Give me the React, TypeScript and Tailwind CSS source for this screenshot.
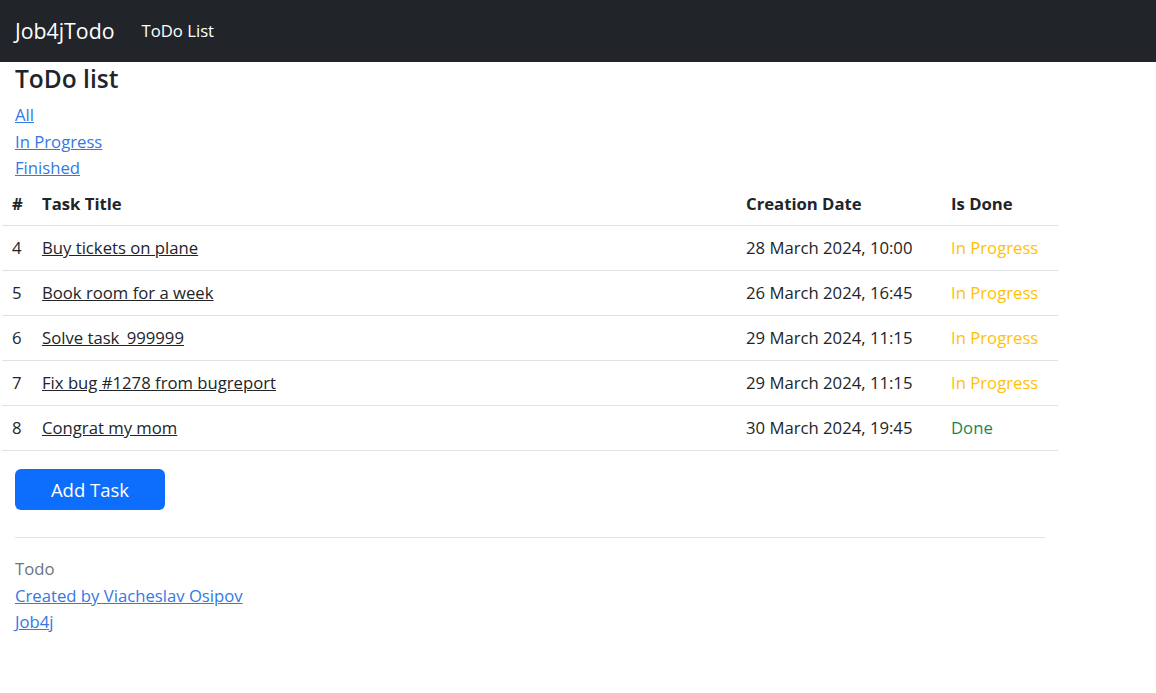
const tasks = [
    { id: 4, title: 'Buy tickets on plane', created: '28 March 2024, 10:00', done: false },
    { id: 5, title: 'Book room for a week', created: '26 March 2024, 16:45', done: false },
    { id: 6, title: 'Solve task_999999', created: '29 March 2024, 11:15', done: false },
    { id: 7, title: 'Fix bug #1278 from bugreport', created: '29 March 2024, 11:15', done: false },
    { id: 8, title: 'Congrat my mom', created: '30 March 2024, 19:45', done: true },
]

export default function App() {
    return (
        <div className="min-h-[693px] bg-white text-[#212529] text-[16.7px] font-['Open_Sans',sans-serif]">
            <nav className="h-[62px] bg-[#212529] flex items-center px-[15px]">
                <a href="#" className="text-white text-[21.3px] mr-[27px]">Job4jTodo</a>
                <a href="#" className="text-white text-[16.7px]">ToDo List</a>
            </nav>

            <div className="pt-[2px]">
                <h4 className="px-[15px] text-[24.5px] font-semibold leading-[30px]">ToDo list</h4>
                <div className="px-[15px] mt-[8px] flex flex-col leading-[26.5px]">
                    <a href="#" className="text-[#3478e5] underline w-fit">All</a>
                    <a href="#" className="text-[#3478e5] underline w-fit">In Progress</a>
                    <a href="#" className="text-[#3478e5] underline w-fit">Finished</a>
                </div>

                <table className="ml-[2px] w-[1056px] border-collapse">
                    <thead>
                        <tr className="h-[44px] border-b border-[#dee2e6] text-left">
                            <th className="w-[30px] pl-[10px] font-bold">#</th>
                            <th className="w-[704px] pl-[10px] font-bold">Task Title</th>
                            <th className="w-[205px] pl-[10px] font-bold">Creation Date</th>
                            <th className="pl-[10px] font-bold">Is Done</th>
                        </tr>
                    </thead>
                    <tbody>
                        {tasks.map(t => (
                            <tr key={t.id} className="h-[45px] border-b border-[#dee2e6]">
                                <td className="pl-[10px]">{t.id}</td>
                                <td className="pl-[10px]">
                                    <a href="#" className="text-[#212529] underline">{t.title}</a>
                                </td>
                                <td className="pl-[10px]">{t.created}</td>
                                <td className={`pl-[10px] ${t.done ? 'text-[#198754]' : 'text-[#ffc107]'}`}>
                                    {t.done ? 'Done' : 'In Progress'}
                                </td>
                            </tr>
                        ))}
                    </tbody>
                </table>

                <div className="px-[15px] mt-[18px]">
                    <button className="w-[150px] h-[41px] bg-[#0d6efd] text-white text-[18.5px] rounded-[6px]">
                        Add Task
                    </button>
                </div>

                <footer className="mx-[15px] mt-[27px] w-[1030px] border-t border-[#dee2e6] pt-[18px] flex flex-col leading-[26.5px]">
                    <span className="text-[#6c757d]">Todo</span>
                    <a href="#" className="text-[#3478e5] underline w-fit">Created by Viacheslav Osipov</a>
                    <a href="#" className="text-[#3478e5] underline w-fit">Job4j</a>
                </footer>
            </div>
        </div>
    )
}
